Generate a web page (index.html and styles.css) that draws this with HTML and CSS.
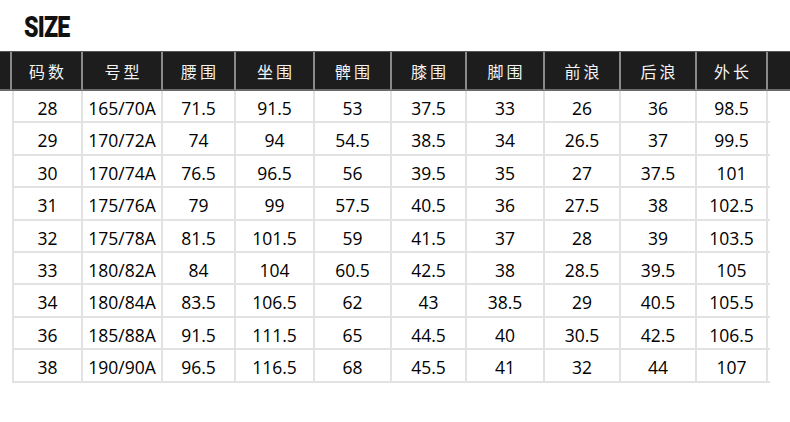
FILE: index.html
```html
<!DOCTYPE html>
<html lang="zh">
<head>
<meta charset="utf-8">
<link rel="stylesheet" href="styles.css">
</head>
<body>
<div class="page">
  <div class="title">SIZE</div>
  <div class="table">
    <div class="row head">
      <div class="cell c0"></div>
      <div class="cell c1">码数</div>
      <div class="cell c2">号型</div>
      <div class="cell c3">腰围</div>
      <div class="cell c4">坐围</div>
      <div class="cell c5">髀围</div>
      <div class="cell c6">膝围</div>
      <div class="cell c7">脚围</div>
      <div class="cell c8">前浪</div>
      <div class="cell c9">后浪</div>
      <div class="cell c10">外长</div>
      <div class="cell c11"></div>
    </div>
    <div class="body">
      <div class="row"><div class="cell c1">28</div><div class="cell c2">165/70A</div><div class="cell c3">71.5</div><div class="cell c4">91.5</div><div class="cell c5">53</div><div class="cell c6">37.5</div><div class="cell c7">33</div><div class="cell c8">26</div><div class="cell c9">36</div><div class="cell c10">98.5</div></div>
      <div class="row"><div class="cell c1">29</div><div class="cell c2">170/72A</div><div class="cell c3">74</div><div class="cell c4">94</div><div class="cell c5">54.5</div><div class="cell c6">38.5</div><div class="cell c7">34</div><div class="cell c8">26.5</div><div class="cell c9">37</div><div class="cell c10">99.5</div></div>
      <div class="row"><div class="cell c1">30</div><div class="cell c2">170/74A</div><div class="cell c3">76.5</div><div class="cell c4">96.5</div><div class="cell c5">56</div><div class="cell c6">39.5</div><div class="cell c7">35</div><div class="cell c8">27</div><div class="cell c9">37.5</div><div class="cell c10">101</div></div>
      <div class="row"><div class="cell c1">31</div><div class="cell c2">175/76A</div><div class="cell c3">79</div><div class="cell c4">99</div><div class="cell c5">57.5</div><div class="cell c6">40.5</div><div class="cell c7">36</div><div class="cell c8">27.5</div><div class="cell c9">38</div><div class="cell c10">102.5</div></div>
      <div class="row"><div class="cell c1">32</div><div class="cell c2">175/78A</div><div class="cell c3">81.5</div><div class="cell c4">101.5</div><div class="cell c5">59</div><div class="cell c6">41.5</div><div class="cell c7">37</div><div class="cell c8">28</div><div class="cell c9">39</div><div class="cell c10">103.5</div></div>
      <div class="row"><div class="cell c1">33</div><div class="cell c2">180/82A</div><div class="cell c3">84</div><div class="cell c4">104</div><div class="cell c5">60.5</div><div class="cell c6">42.5</div><div class="cell c7">38</div><div class="cell c8">28.5</div><div class="cell c9">39.5</div><div class="cell c10">105</div></div>
      <div class="row"><div class="cell c1">34</div><div class="cell c2">180/84A</div><div class="cell c3">83.5</div><div class="cell c4">106.5</div><div class="cell c5">62</div><div class="cell c6">43</div><div class="cell c7">38.5</div><div class="cell c8">29</div><div class="cell c9">40.5</div><div class="cell c10">105.5</div></div>
      <div class="row"><div class="cell c1">36</div><div class="cell c2">185/88A</div><div class="cell c3">91.5</div><div class="cell c4">111.5</div><div class="cell c5">65</div><div class="cell c6">44.5</div><div class="cell c7">40</div><div class="cell c8">30.5</div><div class="cell c9">42.5</div><div class="cell c10">106.5</div></div>
      <div class="row"><div class="cell c1">38</div><div class="cell c2">190/90A</div><div class="cell c3">96.5</div><div class="cell c4">116.5</div><div class="cell c5">68</div><div class="cell c6">45.5</div><div class="cell c7">41</div><div class="cell c8">32</div><div class="cell c9">44</div><div class="cell c10">107</div></div>
    </div>
  </div>
</div>
</body>
</html>
```

FILE: styles.css
```css
html, body {
  margin: 0;
  padding: 0;
  background: #ffffff;
}
.page {
  width: 790px;
  height: 422px;
  overflow: hidden;
  font-family: "Open Sans", "Noto Sans CJK SC", sans-serif;
  color: #000;
}
.title {
  height: 51px;
  padding-left: 24px;
  box-sizing: border-box;
  padding-top: 11px;
  font-family: "Roboto", "Liberation Sans", sans-serif;
  font-weight: 900;
  font-size: 29px;
  line-height: 32px;
  letter-spacing: -1px;
  color: #111;
  transform: scaleX(0.8);
  transform-origin: 24px 0;
}
.row {
  display: flex;
}
.head {
  height: 40px;
  background: #1d1d1d;
  border-top: 1px solid #555;
  box-sizing: border-box;
}
.head .cell {
  color: #f4f4f4;
  font-family: "Noto Sans CJK SC", sans-serif;
  font-size: 16px;
  letter-spacing: 3px;
  text-indent: 3px;
  border-right: 2px solid #8a8a8a;
  border-bottom: 2px solid #6a6a6a;
  height: 39px;
  line-height: 38px;
}
.head .c11 {
  border-right: none;
}
.cell {
  box-sizing: border-box;
  text-align: center;
  flex: none;
}
.c0 { width: 12px; }
.c1 { width: 71px; }
.c2 { width: 80px; }
.c3 { width: 73px; }
.c4 { width: 79px; }
.c5 { width: 77px; }
.c6 { width: 75px; }
.c7 { width: 78px; }
.c8 { width: 76px; }
.c9 { width: 76px; }
.c10 { width: 71px; }
.c11 { width: 22px; }
.body {
  margin-left: 12px;
  width: 758px;
  border-left: 2px solid #e2e2e2;
  box-sizing: border-box;
}
.body .row {
  height: 32.4px;
  border-bottom: 2px solid #e2e2e2;
  box-sizing: border-box;
}
.body .cell {
  font-size: 17.5px;
  line-height: 30px;
  padding-top: 2px;
  border-right: 2px solid #e2e2e2;
}
.body .c1 { width: 69px; }
```
